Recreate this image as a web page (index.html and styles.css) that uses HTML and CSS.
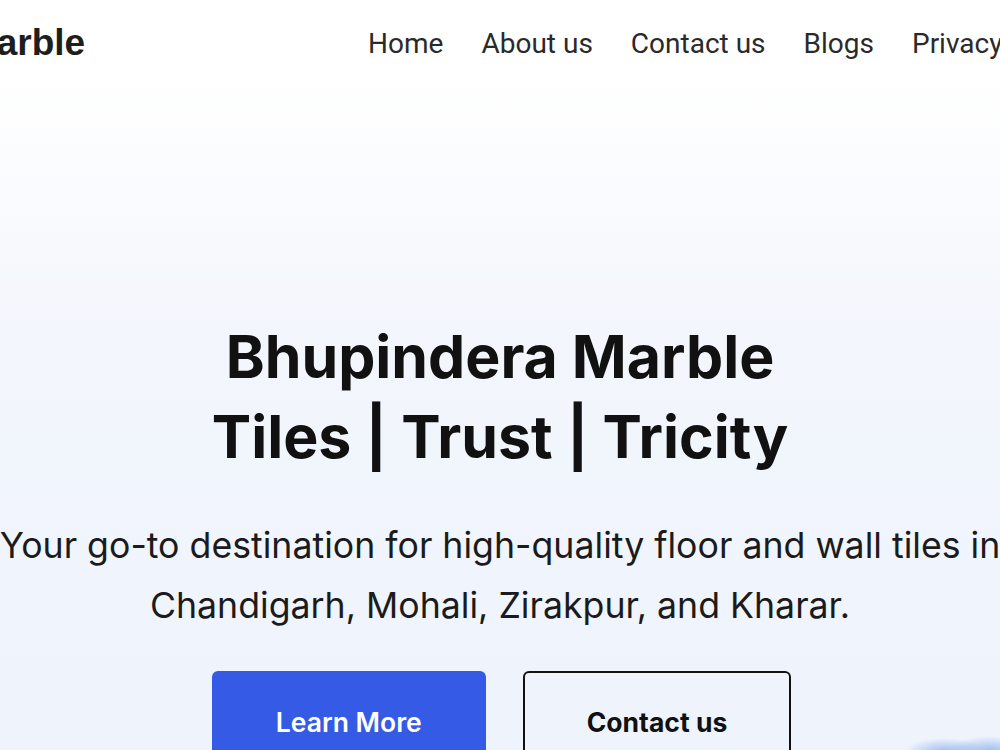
FILE: index.html
```html
<!DOCTYPE html>
<html lang="en">
<head>
<meta charset="UTF-8">
<meta name="viewport" content="width=device-width, initial-scale=1.0">
<title>Bhupindera Marble</title>
<link rel="stylesheet" href="styles.css">
</head>
<body>

<div class="page">
    <div class="header">
        <div class="logo">Bhupindera Marble</div>
        <nav class="nav">
            <a href="#">Home</a>
            <a href="#">About us</a>
            <a href="#">Contact us</a>
            <a href="#">Blogs</a>
            <a href="#">Privacy Policy</a>
        </nav>
    </div>

    <div class="hero">
        <h1>Bhupindera Marble<br>Tiles | Trust | Tricity</h1>
        <p class="intro">Your go-to destination for high-quality floor and wall tiles in Chandigarh, Mohali, Zirakpur, and Kharar.</p>
        <div class="buttons">
            <a href="#" class="btn btn-primary">Learn More</a>
            <a href="#" class="btn btn-outline">Contact us</a>
        </div>
    </div>
</div>

</body>
</html>
```

FILE: styles.css
```css
html {
    overflow: hidden;
}
body {
    margin: 0;
    padding: 0;
    font-family: Roboto, "Liberation Sans", sans-serif;
    color: #222;
    min-height: 100vh;
    background:
        radial-gradient(ellipse 40px 14px at 945px 752px, rgba(90, 140, 230, 0.55), transparent),
        radial-gradient(ellipse 40px 14px at 990px 750px, rgba(90, 140, 230, 0.5), transparent),
        linear-gradient(#ffffff 80px, #f3f6fc 330px, #eef3fc 100%);
}
.page {
    width: 1500px;
    margin-left: -250px;
}
.header {
    display: flex;
    align-items: center;
    height: 86px;
}
.logo {
    font-family: "Liberation Sans", Arial, sans-serif;
    font-weight: bold;
    font-size: 37px;
    color: #1e1e1e;
}
.nav {
    display: flex;
    gap: 38px;
    margin-left: 283px;
}
.nav a {
    text-decoration: none;
    color: #2a2a2a;
    font-size: 28px;
}
.hero {
    text-align: center;
    padding-top: 231px;
}
.hero h1 {
    margin: 0;
    font-family: Inter, sans-serif;
    font-weight: 700;
    font-size: 59px;
    line-height: 80px;
    color: #111;
}
.intro {
    max-width: 1040px;
    margin: 38px auto 0;
    font-family: Inter, sans-serif;
    font-size: 35.7px;
    line-height: 60px;
    color: #1b1b1b;
}
.buttons {
    display: flex;
    justify-content: center;
    gap: 37px;
    margin-top: 36px;
    padding-left: 3px;
}
.btn {
    display: inline-block;
    padding: 33px 62px;
    border: 2px solid transparent;
    border-radius: 6px;
    font-family: Inter, sans-serif;
    font-weight: 600;
    font-size: 26.5px;
    text-decoration: none;
}
.btn-primary {
    background-color: #355be6;
    border-color: #355be6;
    color: white;
}
.btn-outline {
    border-color: #111;
    color: #111;
    font-weight: 700;
}
```
